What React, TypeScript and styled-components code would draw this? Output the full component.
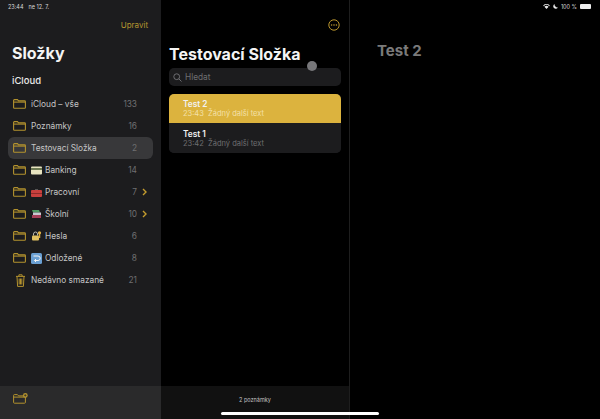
import React from "react";
import styled, { createGlobalStyle } from "styled-components";

const Global = createGlobalStyle`
  html, body { margin: 0; padding: 0; background: #000; }
  body { font-family: Inter, "Liberation Sans", sans-serif; -webkit-font-smoothing: antialiased; }
`;

const Screen = styled.div`
  position: relative;
  width: 600px;
  height: 419px;
  display: flex;
  overflow: hidden;
  background: #000;
`;

const StatusBar = styled.div`
  position: absolute;
  top: 0;
  left: 0;
  right: 0;
  height: 13px;
  padding: 0 9px 0 8px;
  display: flex;
  align-items: center;
  justify-content: space-between;
  font-size: 5.5px;
  color: #d8d8d8;
`;

const StatusLeft = styled.div`
  display: flex;
  align-items: center;
  gap: 5px;
`;

const StatusRight = styled.div`
  display: flex;
  align-items: center;
  gap: 3px;
`;

const Battery = styled.span`
  width: 11px;
  height: 5px;
  background: #eee;
  border-radius: 1px;
`;

const Sidebar = styled.aside`
  width: 161px;
  flex: none;
  display: flex;
  flex-direction: column;
  background: #1c1c1e;
`;

const SideTop = styled.div`
  flex: 1;
  padding: 19px 8px 0;
`;

const EditLink = styled.div`
  height: 12px;
  padding-right: 5px;
  text-align: right;
  font-size: 8px;
  line-height: 12px;
  color: #b39430;
`;

const BigTitle = styled.h1`
  margin: 10px 0 0 4px;
  font-size: 16px;
  line-height: 24px;
  font-weight: 700;
  color: #f4f4f4;
`;

const SectionLabel = styled.div`
  margin: 8px 0 4px 4px;
  font-size: 9.5px;
  line-height: 16px;
  font-weight: 500;
  color: #e8e8e8;
`;

const Row = styled.div<{ $selected?: boolean }>`
  height: 22px;
  padding: 0 1px 0 5px;
  display: flex;
  align-items: center;
  border-radius: 6px;
  background: ${({ $selected }) => ($selected ? "#38383a" : "transparent")};
`;

const RowIcon = styled.span`
  width: 18px;
  flex: none;
  display: flex;
  justify-content: flex-start;
`;

const RowEmoji = styled.span`
  width: 14px;
  flex: none;
  display: flex;
`;

const RowName = styled.span`
  flex: 1;
  font-size: 8.3px;
  color: #c6c6c6;
  white-space: nowrap;
`;

const RowCount = styled.span`
  width: 16px;
  text-align: right;
  font-size: 8.3px;
  color: #6f6f71;
`;

const Chevron = styled.span`
  width: 15px;
  flex: none;
  display: flex;
  justify-content: center;
`;

const SideFooter = styled.div`
  height: 33px;
  flex: none;
  padding: 7px 13px 0;
  box-sizing: border-box;
  display: flex;
  align-items: flex-start;
  background: #2a2a2b;
`;

const Middle = styled.main`
  width: 188px;
  flex: none;
  display: flex;
  flex-direction: column;
  border-right: 1px solid #1e1e1e;
`;

const MiddleTop = styled.div`
  flex: 1;
  padding: 19px 8px 0;
`;

const MoreButton = styled.div`
  height: 12px;
  display: flex;
  justify-content: flex-end;
  padding-right: 1px;
`;

const ListTitle = styled.h2`
  margin: 11px 0 0;
  font-size: 16px;
  line-height: 24px;
  font-weight: 700;
  color: #f4f4f4;
  white-space: nowrap;
`;

const Search = styled.div`
  margin-top: 2px;
  height: 18px;
  padding-left: 4px;
  display: flex;
  align-items: center;
  gap: 3px;
  border-radius: 5px;
  background: #1c1c1e;
  font-size: 8.3px;
  color: #6e6e70;
`;

const NoteList = styled.div`
  margin-top: 7.5px;
  border-radius: 5px;
  overflow: hidden;
  background: #1c1c1e;
`;

const Note = styled.div<{ $active?: boolean }>`
  height: 29.5px;
  padding: 5.5px 14px 0;
  box-sizing: border-box;
  background: ${({ $active }) => ($active ? "#dcb33e" : "#1c1c1e")};
`;

const NoteTitle = styled.div`
  font-size: 8.3px;
  line-height: 10px;
  font-weight: 600;
  color: #f2f2f2;
`;

const NoteMeta = styled.div<{ $active?: boolean }>`
  font-size: 7.5px;
  line-height: 10px;
  white-space: pre;
  color: ${({ $active }) => ($active ? "#f3e0a8" : "#6e6e70")};
`;

const MiddleFooter = styled.div`
  height: 33px;
  flex: none;
  padding-top: 8px;
  box-sizing: border-box;
  text-align: center;
  font-size: 5.5px;
  line-height: 12px;
  color: #c4c4c4;
  background: #111;
`;

const Detail = styled.section`
  flex: 1;
  padding: 42px 27px 0;
`;

const DetailTitle = styled.div`
  font-size: 15px;
  line-height: 18px;
  font-weight: 700;
  color: #7a7a7a;
`;

const TouchDot = styled.span`
  position: absolute;
  left: 307px;
  top: 61px;
  width: 10px;
  height: 10px;
  border-radius: 50%;
  background: #77777a;
`;

const HomeBar = styled.span`
  position: absolute;
  left: 221px;
  top: 412px;
  width: 158px;
  height: 3px;
  border-radius: 2px;
  background: #fff;
`;

const GOLD = "#b3922e";

const FolderIcon = () => (
  <svg width="13" height="10" viewBox="0 0 13 10" fill="none" stroke={GOLD} strokeWidth="1.1">
    <path d="M.6 8.4V1.4a.8.8 0 0 1 .8-.8h3l1.2 1.3h6a.8.8 0 0 1 .8.8v5.7a.8.8 0 0 1-.8.8H1.4a.8.8 0 0 1-.8-.8Z" />
    <path d="M.6 3.1h11.8" />
  </svg>
);

const TrashIcon = () => (
  <svg width="13" height="13" viewBox="-1 0 13 13" fill="none" stroke={GOLD} strokeWidth="1">
    <path d="M2 2.4h9M4.9 2.2V.8h3.2v1.4M3 2.6l.6 9.8h5.8l.6-9.8M5.2 4.5v6M6.5 4.5v6M7.8 4.5v6" />
  </svg>
);

const EmojiCard = () => (
  <svg width="11" height="9" viewBox="0 0 11 9">
    <rect y=".5" width="11" height="8" rx="1" fill="#e8e4c0" />
    <rect y="2" width="11" height="2" fill="#6d7a52" />
  </svg>
);

const EmojiCase = () => (
  <svg width="11" height="9" viewBox="0 0 11 9">
    <path d="M4 1h3v1H4z" fill="#555" />
    <rect y="2" width="11" height="7" rx="1" fill="#c9403e" />
    <rect y="5" width="11" height="1" fill="#8e2b2a" />
  </svg>
);

const EmojiBooks = () => (
  <svg width="11" height="10" viewBox="0 0 11 10">
    <path d="M1 1l7 0 1 2.5-7 0z" fill="#4f9a62" />
    <rect x="2" y="3.5" width="8" height="2.5" fill="#c8c8d0" />
    <rect x="1" y="6" width="9" height="3" fill="#a5405a" />
  </svg>
);

const EmojiLock = () => (
  <svg width="11" height="10" viewBox="0 0 11 10" fill="none">
    <path d="M2.5 4.5V3a2 2 0 0 1 4 0v1.5" stroke="#b8b8b0" strokeWidth="1" />
    <rect x="1" y="4.5" width="7" height="5" rx="1" fill="#e0c060" />
    <path d="M8.5 1v6" stroke="#d9a93a" strokeWidth="1.5" />
    <circle cx="8.5" cy="1.8" r="1.6" fill="#e3b445" />
  </svg>
);

const EmojiBack = () => (
  <svg width="11" height="11" viewBox="0 0 11 11" fill="none">
    <rect width="11" height="11" rx="1.5" fill="#6a9fd2" />
    <path d="M2.5 3H7a2 2 0 0 1 0 4.5H3.5M5 6 3.5 7.5 5 9" stroke="#f2f2f2" strokeWidth="1" />
  </svg>
);

const ChevronIcon = () => (
  <svg width="5" height="8" viewBox="0 0 5 8" fill="none" stroke="#c49c2e" strokeWidth="1.4">
    <path d="M1 1l3 3-3 3" />
  </svg>
);

const NewFolderIcon = () => (
  <svg width="15" height="11" viewBox="0 0 15 11" fill="none">
    <path d="M.6 9.4V2.4a.8.8 0 0 1 .8-.8h3l1.2 1.3h6a.8.8 0 0 1 .8.8v5.7a.8.8 0 0 1-.8.8H1.4a.8.8 0 0 1-.8-.8Z" stroke={GOLD} />
    <path d="M.6 4.1h11.8" stroke={GOLD} />
    <circle cx="12.3" cy="2.4" r="2.4" fill={GOLD} />
    <path d="M12.3 1.2v2.4M11.1 2.4h2.4" stroke="#2a2a2b" strokeWidth=".7" />
  </svg>
);

const MoreIcon = () => (
  <svg width="12" height="12" viewBox="0 0 12 12" fill="none">
    <circle cx="6" cy="6" r="5.2" stroke="#b9952e" />
    <circle cx="3.6" cy="6" r=".8" fill="#b9952e" />
    <circle cx="6" cy="6" r=".8" fill="#b9952e" />
    <circle cx="8.4" cy="6" r=".8" fill="#b9952e" />
  </svg>
);

const SearchIcon = () => (
  <svg width="9" height="9" viewBox="0 0 9 9" fill="none" stroke="#77777a" strokeWidth=".9">
    <circle cx="3.7" cy="3.7" r="2.9" />
    <path d="M5.9 5.9l2.6 2.6" />
  </svg>
);

const WifiIcon = () => (
  <svg width="7" height="5" viewBox="0 0 8 6" fill="#e8e8e8">
    <path d="M0 1.8a5.6 5.6 0 0 1 8 0l-.8.8a4.5 4.5 0 0 0-6.4 0zM1.5 3.3a3.5 3.5 0 0 1 5 0L4 6z" />
  </svg>
);

const MoonIcon = () => (
  <svg width="5" height="5" viewBox="0 0 6 6" fill="#e8e8e8">
    <path d="M2 0a3 3 0 1 0 4 4A3.4 3.4 0 0 1 2 0Z" />
  </svg>
);

type Folder = {
  name: string;
  count: number;
  emoji?: React.ReactNode;
  selected?: boolean;
  nested?: boolean;
  trash?: boolean;
};

const folders: Folder[] = [
  { name: "iCloud – vše", count: 133 },
  { name: "Poznámky", count: 16 },
  { name: "Testovací Složka", count: 2, selected: true },
  { name: "Banking", count: 14, emoji: <EmojiCard /> },
  { name: "Pracovní", count: 7, emoji: <EmojiCase />, nested: true },
  { name: "Školní", count: 10, emoji: <EmojiBooks />, nested: true },
  { name: "Hesla", count: 6, emoji: <EmojiLock /> },
  { name: "Odložené", count: 8, emoji: <EmojiBack /> },
  { name: "Nedávno smazané", count: 21, trash: true },
];

export default function App() {
  return (
    <Screen>
      <Global />
      <Sidebar>
        <SideTop>
          <EditLink>Upravit</EditLink>
          <BigTitle>Složky</BigTitle>
          <SectionLabel>iCloud</SectionLabel>
          {folders.map((folder) => (
            <Row key={folder.name} $selected={folder.selected}>
              <RowIcon>{folder.trash ? <TrashIcon /> : <FolderIcon />}</RowIcon>
              {folder.emoji && <RowEmoji>{folder.emoji}</RowEmoji>}
              <RowName>{folder.name}</RowName>
              <RowCount>{folder.count}</RowCount>
              <Chevron>{folder.nested && <ChevronIcon />}</Chevron>
            </Row>
          ))}
        </SideTop>
        <SideFooter>
          <NewFolderIcon />
        </SideFooter>
      </Sidebar>
      <Middle>
        <MiddleTop>
          <MoreButton>
            <MoreIcon />
          </MoreButton>
          <ListTitle>Testovací Složka</ListTitle>
          <Search>
            <SearchIcon />
            Hledat
          </Search>
          <NoteList>
            <Note $active>
              <NoteTitle>Test 2</NoteTitle>
              <NoteMeta $active>23:43  Žádný další text</NoteMeta>
            </Note>
            <Note>
              <NoteTitle>Test 1</NoteTitle>
              <NoteMeta>23:42  Žádný další text</NoteMeta>
            </Note>
          </NoteList>
        </MiddleTop>
        <MiddleFooter>2 poznámky</MiddleFooter>
      </Middle>
      <Detail>
        <DetailTitle>Test 2</DetailTitle>
      </Detail>
      <StatusBar>
        <StatusLeft>
          <span>23:44</span>
          <span>ne 12. 7.</span>
        </StatusLeft>
        <StatusRight>
          <WifiIcon />
          <MoonIcon />
          <span>100 %</span>
          <Battery />
        </StatusRight>
      </StatusBar>
      <TouchDot />
      <HomeBar />
    </Screen>
  );
}
